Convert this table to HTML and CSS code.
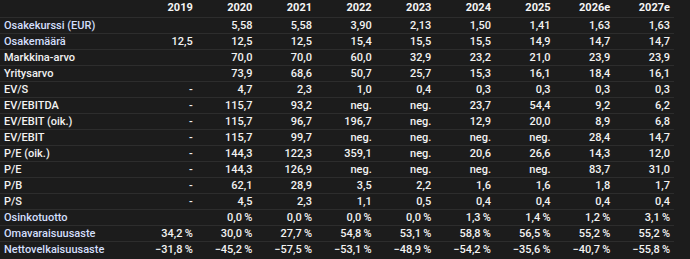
FILE: index.html
```html
<!DOCTYPE html>
<html lang="fi">
<head>
<meta charset="utf-8">
<title>Tunnusluvut</title>
<link rel="stylesheet" href="styles.css">
</head>
<body>
<table class="kpi">
  <colgroup>
    <col class="c-label">
    <col class="c-num"><col class="c-num"><col class="c-num"><col class="c-num"><col class="c-num"><col class="c-num"><col class="c-num"><col class="c-num"><col class="c-num">
  </colgroup>
  <thead>
    <tr><th></th><th>2019</th><th>2020</th><th>2021</th><th>2022</th><th>2023</th><th>2024</th><th>2025</th><th>2026e</th><th>2027e</th></tr>
  </thead>
  <tbody>
    <tr class="hl"><td>Osakekurssi (EUR)</td><td></td><td>5,58</td><td>5,58</td><td>3,90</td><td>2,13</td><td>1,50</td><td>1,41</td><td>1,63</td><td>1,63</td></tr>
    <tr class="hl"><td>Osakemäärä</td><td>12,5</td><td>12,5</td><td>12,5</td><td>15,4</td><td>15,5</td><td>15,5</td><td>14,9</td><td>14,7</td><td>14,7</td></tr>
    <tr><td>Markkina-arvo</td><td></td><td>70,0</td><td>70,0</td><td>60,0</td><td>32,9</td><td>23,2</td><td>21,0</td><td>23,9</td><td>23,9</td></tr>
    <tr><td>Yritysarvo</td><td></td><td>73,9</td><td>68,6</td><td>50,7</td><td>25,7</td><td>15,3</td><td>16,1</td><td>18,4</td><td>16,1</td></tr>
    <tr><td>EV/S</td><td>-</td><td>4,7</td><td>2,3</td><td>1,0</td><td>0,4</td><td>0,3</td><td>0,3</td><td>0,3</td><td>0,3</td></tr>
    <tr><td>EV/EBITDA</td><td>-</td><td>115,7</td><td>93,2</td><td>neg.</td><td>neg.</td><td>23,7</td><td>54,4</td><td>9,2</td><td>6,2</td></tr>
    <tr><td>EV/EBIT (oik.)</td><td>-</td><td>115,7</td><td>96,7</td><td>196,7</td><td>neg.</td><td>12,9</td><td>20,0</td><td>8,9</td><td>6,8</td></tr>
    <tr><td>EV/EBIT</td><td>-</td><td>115,7</td><td>99,7</td><td>neg.</td><td>neg.</td><td>neg.</td><td>neg.</td><td>28,4</td><td>14,7</td></tr>
    <tr><td>P/E (oik.)</td><td>-</td><td>144,3</td><td>122,3</td><td>359,1</td><td>neg.</td><td>20,6</td><td>26,6</td><td>14,3</td><td>12,0</td></tr>
    <tr><td>P/E</td><td>-</td><td>144,3</td><td>126,9</td><td>neg.</td><td>neg.</td><td>neg.</td><td>neg.</td><td>83,7</td><td>31,0</td></tr>
    <tr><td>P/B</td><td>-</td><td>62,1</td><td>28,9</td><td>3,5</td><td>2,2</td><td>1,6</td><td>1,6</td><td>1,8</td><td>1,7</td></tr>
    <tr><td>P/S</td><td>-</td><td>4,5</td><td>2,3</td><td>1,1</td><td>0,5</td><td>0,4</td><td>0,4</td><td>0,4</td><td>0,4</td></tr>
    <tr class="hl"><td>Osinkotuotto</td><td></td><td>0,0&#8201;%</td><td>0,0&#8201;%</td><td>0,0&#8201;%</td><td>0,0&#8201;%</td><td>1,3&#8201;%</td><td>1,4&#8201;%</td><td>1,2&#8201;%</td><td>3,1&#8201;%</td></tr>
    <tr class="hl"><td>Omavaraisuusaste</td><td>34,2&#8201;%</td><td>30,0&#8201;%</td><td>27,7&#8201;%</td><td>54,8&#8201;%</td><td>53,1&#8201;%</td><td>58,8&#8201;%</td><td>56,5&#8201;%</td><td>55,2&#8201;%</td><td>55,2&#8201;%</td></tr>
    <tr class="hl"><td>Nettovelkaisuusaste</td><td>&minus;31,8&#8201;%</td><td>&minus;45,2&#8201;%</td><td>&minus;57,5&#8201;%</td><td>&minus;53,1&#8201;%</td><td>&minus;48,9&#8201;%</td><td>&minus;54,2&#8201;%</td><td>&minus;35,6&#8201;%</td><td>&minus;40,7&#8201;%</td><td>&minus;55,8&#8201;%</td></tr>
  </tbody>
</table>
</body>
</html>
```
FILE: styles.css
```css
html, body {
  margin: 0;
  padding: 0;
  background: #1c1c1c;
}

body {
  font-family: Roboto, "Liberation Sans", Arial, sans-serif;
  font-size: 11px;
  color: #f2f2f2;
  padding-right: 16px;
}

.kpi {
  border-collapse: collapse;
  table-layout: fixed;
  width: 674px;
}

.c-label { width: 137px; }
.c-num { width: 59.6px; }

.kpi th,
.kpi td {
  height: 15px;
  padding: 0 4px;
  line-height: 15px;
  text-align: right;
  white-space: nowrap;
  font-weight: 500;
}

.kpi th {
  height: 16px;
  line-height: 16px;
  padding-bottom: 1px;
  font-weight: 700;
  color: #f5f5f5;
}

.kpi td:first-child,
.kpi th:first-child {
  text-align: left;
}

.kpi tbody tr {
  border-top: 1px solid #2d2d2d;
}

.kpi tr.hl td:first-child {
  color: #d3dffb;
}
```
